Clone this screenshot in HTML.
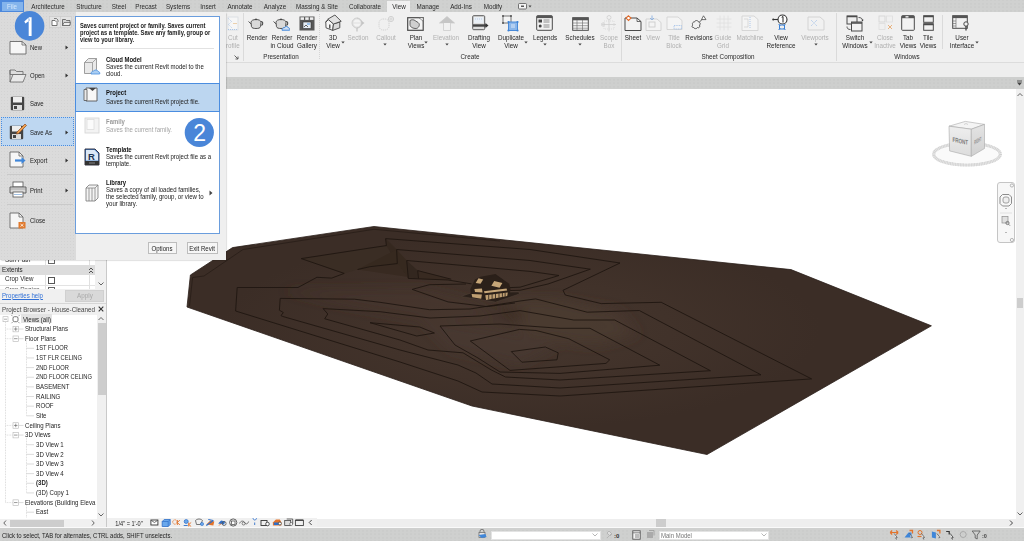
<!DOCTYPE html><html><head><meta charset="utf-8"><style>
*{margin:0;padding:0;box-sizing:border-box}
html,body{width:1024px;height:541px;overflow:hidden;background:#fff;font-family:"Liberation Sans",sans-serif;color:#222}
.a{position:absolute}
.t{position:absolute;white-space:nowrap;line-height:10px}
</style></head><body>
<div class="a" style="left:0px;top:0px;width:1024px;height:12px;background:#d0d1d0;background-image:radial-gradient(circle,rgba(0,0,0,0.035) 0.5px,transparent 0.9px);background-size:4px 3.5px;background-position:1px 2px"></div>
<div class="a" style="left:0px;top:12px;width:1024px;height:50px;background:#f0f0f0"></div>
<div class="a" style="left:0px;top:61.5px;width:1024px;height:1px;background:#dcdcdc"></div>
<div class="a" style="left:0px;top:62.5px;width:1024px;height:14.5px;background:#eeeeee"></div>
<div class="a" style="left:107px;top:89px;width:909px;height:429.5px;background:#fff"></div>
<div class="a" style="left:1016px;top:89px;width:8px;height:438px;background:#eeeeee"></div>
<div class="a" style="left:107px;top:518.5px;width:909px;height:8px;background:#eeeeee"></div>
<div class="a" style="left:0px;top:526.5px;width:1024px;height:1px;background:#fafafa"></div>
<div class="a" style="left:387px;top:1px;width:23px;height:11px;background:#f0f0f0"></div>
<div class="t" style="left:-12.10px;top:2.15px;width:120px;text-align:center;font-size:7.12px;color:#2a2a2a;font-weight:normal;transform:scaleX(0.885);transform-origin:60px 50%;">Architecture</div>
<div class="t" style="left:28.50px;top:2.15px;width:120px;text-align:center;font-size:7.12px;color:#2a2a2a;font-weight:normal;transform:scaleX(0.885);transform-origin:60px 50%;">Structure</div>
<div class="t" style="left:58.50px;top:2.15px;width:120px;text-align:center;font-size:7.12px;color:#2a2a2a;font-weight:normal;transform:scaleX(0.885);transform-origin:60px 50%;">Steel</div>
<div class="t" style="left:86.15px;top:2.15px;width:120px;text-align:center;font-size:7.12px;color:#2a2a2a;font-weight:normal;transform:scaleX(0.885);transform-origin:60px 50%;">Precast</div>
<div class="t" style="left:118.40px;top:2.15px;width:120px;text-align:center;font-size:7.12px;color:#2a2a2a;font-weight:normal;transform:scaleX(0.885);transform-origin:60px 50%;">Systems</div>
<div class="t" style="left:148.25px;top:2.15px;width:120px;text-align:center;font-size:7.12px;color:#2a2a2a;font-weight:normal;transform:scaleX(0.885);transform-origin:60px 50%;">Insert</div>
<div class="t" style="left:179.90px;top:2.15px;width:120px;text-align:center;font-size:7.12px;color:#2a2a2a;font-weight:normal;transform:scaleX(0.885);transform-origin:60px 50%;">Annotate</div>
<div class="t" style="left:214.55px;top:2.15px;width:120px;text-align:center;font-size:7.12px;color:#2a2a2a;font-weight:normal;transform:scaleX(0.885);transform-origin:60px 50%;">Analyze</div>
<div class="t" style="left:257.20px;top:2.15px;width:120px;text-align:center;font-size:7.12px;color:#2a2a2a;font-weight:normal;transform:scaleX(0.885);transform-origin:60px 50%;">Massing &amp; Site</div>
<div class="t" style="left:305.30px;top:2.15px;width:120px;text-align:center;font-size:7.12px;color:#2a2a2a;font-weight:normal;transform:scaleX(0.885);transform-origin:60px 50%;">Collaborate</div>
<div class="t" style="left:338.50px;top:2.15px;width:120px;text-align:center;font-size:7.12px;color:#2a2a2a;font-weight:normal;transform:scaleX(0.885);transform-origin:60px 50%;">View</div>
<div class="t" style="left:367.50px;top:2.15px;width:120px;text-align:center;font-size:7.12px;color:#2a2a2a;font-weight:normal;transform:scaleX(0.885);transform-origin:60px 50%;">Manage</div>
<div class="t" style="left:401.00px;top:2.15px;width:120px;text-align:center;font-size:7.12px;color:#2a2a2a;font-weight:normal;transform:scaleX(0.885);transform-origin:60px 50%;">Add-Ins</div>
<div class="t" style="left:433.00px;top:2.15px;width:120px;text-align:center;font-size:7.12px;color:#2a2a2a;font-weight:normal;transform:scaleX(0.885);transform-origin:60px 50%;">Modify</div>
<svg class="a" style="left:518px;top:3px;" width="14" height="7" viewBox="0 0 14 7"><rect x="0.5" y="0.5" width="8" height="5.5" rx="1" fill="#f4f4f4" stroke="#555" stroke-width="0.8"/><rect x="3" y="2.5" width="3" height="1.5" fill="#555"/><path d="M10.5 2.5h3l-1.5 2z" fill="#444"/></svg>
<div class="a" style="left:0px;top:0px;width:24px;height:12.5px;background:#4c88dc"></div>
<div class="a" style="left:1.8px;top:2px;width:21px;height:9px;background:#84b4ec"></div>
<div class="t" style="left:-48.00px;top:2.25px;width:120px;text-align:center;font-size:7.12px;color:#d6e8fa;font-weight:normal;transform:scaleX(0.885);transform-origin:60px 50%;">File</div>
<div class="t" style="left:228.30px;top:33.05px;font-size:7.12px;color:#b0b0b0;font-weight:normal;transform:scaleX(0.885);transform-origin:0 50%;">Cut</div>
<div class="t" style="left:226.20px;top:40.95px;font-size:7.12px;color:#b0b0b0;font-weight:normal;transform:scaleX(0.885);transform-origin:0 50%;">rofile</div>
<div class="t" style="left:196.50px;top:33.05px;width:120px;text-align:center;font-size:7.12px;color:#262626;font-weight:normal;transform:scaleX(0.885);transform-origin:60px 50%;">Render</div>
<div class="t" style="left:221.50px;top:33.05px;width:120px;text-align:center;font-size:7.12px;color:#262626;font-weight:normal;transform:scaleX(0.885);transform-origin:60px 50%;">Render</div>
<div class="t" style="left:221.50px;top:40.95px;width:120px;text-align:center;font-size:7.12px;color:#262626;font-weight:normal;transform:scaleX(0.885);transform-origin:60px 50%;">in Cloud</div>
<div class="t" style="left:246.50px;top:33.05px;width:120px;text-align:center;font-size:7.12px;color:#262626;font-weight:normal;transform:scaleX(0.885);transform-origin:60px 50%;">Render</div>
<div class="t" style="left:246.50px;top:40.95px;width:120px;text-align:center;font-size:7.12px;color:#262626;font-weight:normal;transform:scaleX(0.885);transform-origin:60px 50%;">Gallery</div>
<div class="t" style="left:273.00px;top:33.05px;width:120px;text-align:center;font-size:7.12px;color:#262626;font-weight:normal;transform:scaleX(0.885);transform-origin:60px 50%;">3D</div>
<div class="t" style="left:273.00px;top:40.95px;width:120px;text-align:center;font-size:7.12px;color:#262626;font-weight:normal;transform:scaleX(0.885);transform-origin:60px 50%;">View</div>
<div class="t" style="left:297.80px;top:33.05px;width:120px;text-align:center;font-size:7.12px;color:#b0b0b0;font-weight:normal;transform:scaleX(0.885);transform-origin:60px 50%;">Section</div>
<div class="t" style="left:326.00px;top:33.05px;width:120px;text-align:center;font-size:7.12px;color:#b0b0b0;font-weight:normal;transform:scaleX(0.885);transform-origin:60px 50%;">Callout</div>
<div class="t" style="left:355.50px;top:33.05px;width:120px;text-align:center;font-size:7.12px;color:#262626;font-weight:normal;transform:scaleX(0.885);transform-origin:60px 50%;">Plan</div>
<div class="t" style="left:355.50px;top:40.95px;width:120px;text-align:center;font-size:7.12px;color:#262626;font-weight:normal;transform:scaleX(0.885);transform-origin:60px 50%;">Views</div>
<div class="t" style="left:386.30px;top:33.05px;width:120px;text-align:center;font-size:7.12px;color:#b0b0b0;font-weight:normal;transform:scaleX(0.885);transform-origin:60px 50%;">Elevation</div>
<div class="t" style="left:418.80px;top:33.05px;width:120px;text-align:center;font-size:7.12px;color:#262626;font-weight:normal;transform:scaleX(0.885);transform-origin:60px 50%;">Drafting</div>
<div class="t" style="left:418.80px;top:40.95px;width:120px;text-align:center;font-size:7.12px;color:#262626;font-weight:normal;transform:scaleX(0.885);transform-origin:60px 50%;">View</div>
<div class="t" style="left:450.60px;top:33.05px;width:120px;text-align:center;font-size:7.12px;color:#262626;font-weight:normal;transform:scaleX(0.885);transform-origin:60px 50%;">Duplicate</div>
<div class="t" style="left:450.60px;top:40.95px;width:120px;text-align:center;font-size:7.12px;color:#262626;font-weight:normal;transform:scaleX(0.885);transform-origin:60px 50%;">View</div>
<div class="t" style="left:485.00px;top:33.05px;width:120px;text-align:center;font-size:7.12px;color:#262626;font-weight:normal;transform:scaleX(0.885);transform-origin:60px 50%;">Legends</div>
<div class="t" style="left:520.00px;top:33.05px;width:120px;text-align:center;font-size:7.12px;color:#262626;font-weight:normal;transform:scaleX(0.885);transform-origin:60px 50%;">Schedules</div>
<div class="t" style="left:549.00px;top:33.05px;width:120px;text-align:center;font-size:7.12px;color:#b0b0b0;font-weight:normal;transform:scaleX(0.885);transform-origin:60px 50%;">Scope</div>
<div class="t" style="left:549.00px;top:40.95px;width:120px;text-align:center;font-size:7.12px;color:#b0b0b0;font-weight:normal;transform:scaleX(0.885);transform-origin:60px 50%;">Box</div>
<div class="t" style="left:573.00px;top:33.05px;width:120px;text-align:center;font-size:7.12px;color:#262626;font-weight:normal;transform:scaleX(0.885);transform-origin:60px 50%;">Sheet</div>
<div class="t" style="left:593.30px;top:33.05px;width:120px;text-align:center;font-size:7.12px;color:#b0b0b0;font-weight:normal;transform:scaleX(0.885);transform-origin:60px 50%;">View</div>
<div class="t" style="left:614.00px;top:33.05px;width:120px;text-align:center;font-size:7.12px;color:#b0b0b0;font-weight:normal;transform:scaleX(0.885);transform-origin:60px 50%;">Title</div>
<div class="t" style="left:614.00px;top:40.95px;width:120px;text-align:center;font-size:7.12px;color:#b0b0b0;font-weight:normal;transform:scaleX(0.885);transform-origin:60px 50%;">Block</div>
<div class="t" style="left:638.80px;top:33.05px;width:120px;text-align:center;font-size:7.12px;color:#262626;font-weight:normal;transform:scaleX(0.885);transform-origin:60px 50%;">Revisions</div>
<div class="t" style="left:663.00px;top:33.05px;width:120px;text-align:center;font-size:7.12px;color:#b0b0b0;font-weight:normal;transform:scaleX(0.885);transform-origin:60px 50%;">Guide</div>
<div class="t" style="left:663.00px;top:40.95px;width:120px;text-align:center;font-size:7.12px;color:#b0b0b0;font-weight:normal;transform:scaleX(0.885);transform-origin:60px 50%;">Grid</div>
<div class="t" style="left:690.20px;top:33.05px;width:120px;text-align:center;font-size:7.12px;color:#b0b0b0;font-weight:normal;transform:scaleX(0.885);transform-origin:60px 50%;">Matchline</div>
<div class="t" style="left:721.00px;top:33.05px;width:120px;text-align:center;font-size:7.12px;color:#262626;font-weight:normal;transform:scaleX(0.885);transform-origin:60px 50%;">View</div>
<div class="t" style="left:721.00px;top:40.95px;width:120px;text-align:center;font-size:7.12px;color:#262626;font-weight:normal;transform:scaleX(0.885);transform-origin:60px 50%;">Reference</div>
<div class="t" style="left:755.00px;top:33.05px;width:120px;text-align:center;font-size:7.12px;color:#b0b0b0;font-weight:normal;transform:scaleX(0.885);transform-origin:60px 50%;">Viewports</div>
<div class="t" style="left:795.00px;top:33.05px;width:120px;text-align:center;font-size:7.12px;color:#262626;font-weight:normal;transform:scaleX(0.885);transform-origin:60px 50%;">Switch</div>
<div class="t" style="left:795.00px;top:40.95px;width:120px;text-align:center;font-size:7.12px;color:#262626;font-weight:normal;transform:scaleX(0.885);transform-origin:60px 50%;">Windows</div>
<div class="t" style="left:825.00px;top:33.05px;width:120px;text-align:center;font-size:7.12px;color:#b0b0b0;font-weight:normal;transform:scaleX(0.885);transform-origin:60px 50%;">Close</div>
<div class="t" style="left:825.00px;top:40.95px;width:120px;text-align:center;font-size:7.12px;color:#b0b0b0;font-weight:normal;transform:scaleX(0.885);transform-origin:60px 50%;">Inactive</div>
<div class="t" style="left:847.70px;top:33.05px;width:120px;text-align:center;font-size:7.12px;color:#262626;font-weight:normal;transform:scaleX(0.885);transform-origin:60px 50%;">Tab</div>
<div class="t" style="left:847.70px;top:40.95px;width:120px;text-align:center;font-size:7.12px;color:#262626;font-weight:normal;transform:scaleX(0.885);transform-origin:60px 50%;">Views</div>
<div class="t" style="left:868.00px;top:33.05px;width:120px;text-align:center;font-size:7.12px;color:#262626;font-weight:normal;transform:scaleX(0.885);transform-origin:60px 50%;">Tile</div>
<div class="t" style="left:868.00px;top:40.95px;width:120px;text-align:center;font-size:7.12px;color:#262626;font-weight:normal;transform:scaleX(0.885);transform-origin:60px 50%;">Views</div>
<div class="t" style="left:901.60px;top:33.05px;width:120px;text-align:center;font-size:7.12px;color:#262626;font-weight:normal;transform:scaleX(0.885);transform-origin:60px 50%;">User</div>
<div class="t" style="left:901.60px;top:40.95px;width:120px;text-align:center;font-size:7.12px;color:#262626;font-weight:normal;transform:scaleX(0.885);transform-origin:60px 50%;">Interface</div>
<svg class="a" style="left:340.5px;top:41.3px;" width="4" height="3" viewBox="0 0 4 3"><path d="M0.3 0.5h3.4l-1.7 2z" fill="#444"/></svg>
<svg class="a" style="left:383.4px;top:42.8px;" width="4" height="3" viewBox="0 0 4 3"><path d="M0.3 0.5h3.4l-1.7 2z" fill="#444"/></svg>
<svg class="a" style="left:424.4px;top:40.8px;" width="4" height="3" viewBox="0 0 4 3"><path d="M0.3 0.5h3.4l-1.7 2z" fill="#444"/></svg>
<svg class="a" style="left:444.6px;top:42.8px;" width="4" height="3" viewBox="0 0 4 3"><path d="M0.3 0.5h3.4l-1.7 2z" fill="#444"/></svg>
<svg class="a" style="left:524.4px;top:41px;" width="4" height="3" viewBox="0 0 4 3"><path d="M0.3 0.5h3.4l-1.7 2z" fill="#444"/></svg>
<svg class="a" style="left:543.2px;top:42.8px;" width="4" height="3" viewBox="0 0 4 3"><path d="M0.3 0.5h3.4l-1.7 2z" fill="#444"/></svg>
<svg class="a" style="left:578.3px;top:42.8px;" width="4" height="3" viewBox="0 0 4 3"><path d="M0.3 0.5h3.4l-1.7 2z" fill="#444"/></svg>
<svg class="a" style="left:813.9px;top:43.2px;" width="4" height="3" viewBox="0 0 4 3"><path d="M0.3 0.5h3.4l-1.7 2z" fill="#444"/></svg>
<svg class="a" style="left:868.7px;top:40.5px;" width="4" height="3" viewBox="0 0 4 3"><path d="M0.3 0.5h3.4l-1.7 2z" fill="#444"/></svg>
<svg class="a" style="left:974.8px;top:40.5px;" width="4" height="3" viewBox="0 0 4 3"><path d="M0.3 0.5h3.4l-1.7 2z" fill="#444"/></svg>
<div class="t" style="left:221.30px;top:52.25px;width:120px;text-align:center;font-size:7.12px;color:#2a2a2a;font-weight:normal;transform:scaleX(0.885);transform-origin:60px 50%;">Presentation</div>
<div class="t" style="left:410.00px;top:52.25px;width:120px;text-align:center;font-size:7.12px;color:#2a2a2a;font-weight:normal;transform:scaleX(0.885);transform-origin:60px 50%;">Create</div>
<div class="t" style="left:668.30px;top:52.25px;width:120px;text-align:center;font-size:7.12px;color:#2a2a2a;font-weight:normal;transform:scaleX(0.885);transform-origin:60px 50%;">Sheet Composition</div>
<div class="t" style="left:847.00px;top:52.25px;width:120px;text-align:center;font-size:7.12px;color:#2a2a2a;font-weight:normal;transform:scaleX(0.885);transform-origin:60px 50%;">Windows</div>
<svg class="a" style="left:234px;top:55px;" width="5" height="5" viewBox="0 0 5 5"><path d="M0.5 0.5L4 4M4 1.5V4H1.5" stroke="#555" stroke-width="0.9" fill="none"/></svg>
<div class="a" style="left:243.3px;top:13px;width:0.8px;height:48px;background:#dadada"></div>
<div class="a" style="left:620.8px;top:13px;width:0.8px;height:48px;background:#dadada"></div>
<div class="a" style="left:835.7px;top:13px;width:0.8px;height:48px;background:#dadada"></div>
<div class="a" style="left:319.3px;top:14px;width:0.8px;height:46px;background:repeating-linear-gradient(#d5d5d5 0 1px, transparent 1px 2px)"></div>
<div class="a" style="left:941.5px;top:15px;width:0.8px;height:34px;background:#dadada"></div>
<svg class="a" style="left:227px;top:16px;" width="12" height="15" viewBox="0 0 12 15"><rect x="1" y="1" width="10" height="13" fill="#f6f6f6" stroke="#d8dce2" stroke-width="0.8"/><path d="M1.5 2.5l3 3-3 3 3 3" stroke="#a9c4e6" stroke-width="1" fill="none" stroke-dasharray="1 1"/><path d="M1 13.5h10" stroke="#a9c4e6" stroke-dasharray="1 1"/><path d="M6 7.5h4" stroke="#e8c79a" stroke-width="0.8"/></svg>
<svg class="a" style="left:247.5px;top:17px;" width="16" height="12" viewBox="0 0 16 12"><path d="M3 5.5c0-2 2.2-3 5-3s5 1 5 3l-0.5 4.2c-0.4 1.3-2 1.8-4.5 1.8s-4.1-0.5-4.5-1.8z" fill="#d9d9d9" stroke="#444" stroke-width="0.9"/><path d="M0.5 4.5l2.7 2.5" stroke="#444" stroke-width="0.9"/><path d="M13 4.5c2 0 2.5 2.5 0.5 4" stroke="#444" stroke-width="1.1" fill="none"/><circle cx="8" cy="2.3" r="0.9" fill="#444"/></svg>
<svg class="a" style="left:273px;top:17px;" width="17" height="14" viewBox="0 0 17 14"><path d="M3 5.5c0-2 2.2-3 5-3s5 1 5 3l-0.5 4.2c-0.4 1.3-2 1.8-4.5 1.8s-4.1-0.5-4.5-1.8z" fill="#d9d9d9" stroke="#444" stroke-width="0.9"/><path d="M0.5 4.5l2.7 2.5" stroke="#444" stroke-width="0.9"/><path d="M13 4.5c2 0 2.5 2.5 0.5 4" stroke="#444" stroke-width="1.1" fill="none"/><circle cx="8" cy="2.3" r="0.9" fill="#444"/><path d="M9 13.2c0-1.5 1-2.6 2.5-2.6 0.6-1.5 3.5-1.5 4 0.3 1 0 1.5 1.2 1.2 2.3z" fill="#cfe0f5" stroke="#3f86d9" stroke-width="1"/></svg>
<svg class="a" style="left:298.5px;top:16px;" width="16" height="15" viewBox="0 0 16 15"><rect x="0.5" y="0.5" width="15" height="14" fill="#585858"/><rect x="1.5" y="1.3" width="3.5" height="2.6" fill="#eee"/><rect x="6.2" y="1.3" width="3.5" height="2.6" fill="#eee"/><rect x="10.9" y="1.3" width="3.5" height="2.6" fill="#eee"/><rect x="4" y="6" width="8" height="6.5" fill="#e7eef6" stroke="#333" stroke-width="0.6"/><path d="M5 11l2-2 2 2" stroke="#444" fill="none" stroke-width="0.8"/><rect x="8" y="7" width="3" height="2" fill="#9fc3ea"/></svg>
<svg class="a" style="left:322px;top:13px;" width="24" height="20" viewBox="0 0 24 20"><path d="M3.8 9.2L6.5 6.5 11.5 10.9 10.7 17.4 4 14.8z" fill="#f7f7f7" stroke="#444" stroke-width="0.9" stroke-linejoin="round"/><path d="M11.5 10.7L17.8 9.2 17.8 14.8 10.7 17.4z" fill="#d9d9d9" stroke="#444" stroke-width="0.9" stroke-linejoin="round"/><path d="M5.8 6.2L12.9 2 19.2 8.3 11.6 11z" fill="#e2e2e2" stroke="#444" stroke-width="0.9" stroke-linejoin="round"/><path d="M3.2 9.3L6.2 6.4" stroke="#444" stroke-width="1"/><path d="M7.2 11.6h1.2v4h-1.2z" fill="#333"/></svg>
<svg class="a" style="left:351px;top:15.5px;" width="15" height="16" viewBox="0 0 15 16"><circle cx="6" cy="7" r="5" fill="#f0f0f0" stroke="#c9c9c9" stroke-width="0.9"/><path d="M6 1.5L13.5 7 6 12.5z" fill="#c4c4c4"/><circle cx="6" cy="7" r="4.2" fill="#f3f3f3" stroke="#cfcfcf" stroke-width="0.7"/><path d="M6 12v3.5" stroke="#c4c4c4" stroke-width="1.3"/><path d="M2.5 7h7" stroke="#d3d3d3" stroke-width="0.6"/></svg>
<svg class="a" style="left:378px;top:15px;" width="17" height="16" viewBox="0 0 17 16"><rect x="1" y="4" width="10" height="11" rx="4" fill="none" stroke="#cdcdcd" stroke-width="0.9" stroke-dasharray="1.2 0.8"/><circle cx="13" cy="4" r="2.6" fill="none" stroke="#cdcdcd" stroke-width="0.9"/><path d="M13 2.2v3.6M11.2 4h3.6" stroke="#cdcdcd" stroke-width="0.7"/></svg>
<svg class="a" style="left:407px;top:17px;" width="17" height="14" viewBox="0 0 17 14"><rect x="0.7" y="0.7" width="15.5" height="12.6" fill="#f4f4f4" stroke="#4a4a4a" stroke-width="1.2"/><path d="M3 3.5c1-1 4-1 5 0s3 1.5 4 3-0.5 5-3 5-6-1-6-4z" fill="#cfcfcf" stroke="#555" stroke-width="0.9"/><path d="M12 0.7l4.2 3.5V0.7z" fill="#fff" stroke="#555" stroke-width="0.6"/></svg>
<svg class="a" style="left:438.5px;top:16px;" width="16" height="15" viewBox="0 0 16 15"><path d="M8 0.5L15.5 7h-4v7.5h-7V7h-4z" fill="#f1f1f1" stroke="#d0d0d0" stroke-width="0.9"/><path d="M8 0.5L15.5 7h-15z" fill="#c6c6c6"/></svg>
<svg class="a" style="left:471.5px;top:15px;" width="17" height="16" viewBox="0 0 17 16"><rect x="0.7" y="0.7" width="12" height="14" rx="1" fill="#dedede" stroke="#5a5a5a" stroke-width="1"/><rect x="2" y="2" width="9.5" height="6" fill="#eaf0f6"/><path d="M3 4h7" stroke="#9fbbe0" stroke-width="0.6" stroke-dasharray="1 1"/><path d="M1 10.5h13" stroke="#444" stroke-width="2.4"/><path d="M13.5 8l3 2.5-3 2.5z" fill="#333"/></svg>
<svg class="a" style="left:501.5px;top:14.5px;" width="17" height="17" viewBox="0 0 17 17"><rect x="1" y="1" width="8" height="7" fill="#f4f4f4" stroke="#555" stroke-width="0.8"/><circle cx="1" cy="1" r="1" fill="#555"/><circle cx="9" cy="1" r="1" fill="#555"/><circle cx="1" cy="8" r="1" fill="#555"/><rect x="6.5" y="7" width="9" height="8.5" fill="#8ab6ea" stroke="#3c82d6" stroke-width="0.9"/><circle cx="6.5" cy="7" r="1.1" fill="#3c82d6"/><circle cx="15.5" cy="7" r="1.1" fill="#3c82d6"/><circle cx="6.5" cy="15.5" r="1.1" fill="#3c82d6"/><circle cx="15.5" cy="15.5" r="1.1" fill="#3c82d6"/><path d="M9 10h4M9 12h4" stroke="#fff" stroke-width="0.7"/></svg>
<svg class="a" style="left:536px;top:15px;" width="17" height="16" viewBox="0 0 17 16"><rect x="0.7" y="0.7" width="15.6" height="14.6" rx="1" fill="#f2f2f2" stroke="#4a4a4a" stroke-width="1"/><rect x="0.7" y="0.7" width="15.6" height="2.4" fill="#555"/><rect x="2.5" y="4.5" width="3.5" height="3" fill="#444"/><circle cx="4.2" cy="11" r="1.5" fill="#444"/><path d="M7.5 5h6M7.5 7h6M7.5 10h6M7.5 12h6" stroke="#777" stroke-width="0.8"/></svg>
<svg class="a" style="left:572px;top:16.5px;" width="17" height="14" viewBox="0 0 17 14"><rect x="0.7" y="0.7" width="15.6" height="12.6" fill="#f6f6f6" stroke="#4a4a4a" stroke-width="1"/><rect x="0.7" y="0.7" width="15.6" height="2.6" fill="#555"/><path d="M1 6h15M1 8.7h15M1 11.2h15M5 3v10M10.5 3v10" stroke="#666" stroke-width="0.6"/></svg>
<svg class="a" style="left:601px;top:14.5px;" width="16" height="17" viewBox="0 0 16 17"><circle cx="8" cy="2.5" r="2" fill="none" stroke="#cfcfcf" stroke-width="0.8"/><path d="M8 4.5v12M1 9.5h14" stroke="#cfcfcf" stroke-width="0.8"/><rect x="3" y="6" width="10" height="8" fill="none" stroke="#d7d7d7" stroke-dasharray="1 1" stroke-width="0.8"/><circle cx="2" cy="9.5" r="1.6" fill="none" stroke="#cfcfcf" stroke-width="0.8"/></svg>
<svg class="a" style="left:624px;top:14.5px;" width="18" height="16" viewBox="0 0 18 16"><path d="M1 3h12l4 3.5v9h-16z" fill="#f2f2f2" stroke="#4a4a4a" stroke-width="1"/><path d="M13 3v3.5h4" fill="none" stroke="#4a4a4a" stroke-width="0.8"/><path d="M4.5 0.8l2.5 2.3-2.5 2.3-2.5-2.3z" fill="#fff" stroke="#e06a2a" stroke-width="1.1"/></svg>
<svg class="a" style="left:644.5px;top:14.5px;" width="17" height="16" viewBox="0 0 17 16"><path d="M1 4h11l4 3.5v8h-15z" fill="#f4f4f4" stroke="#cfcfcf" stroke-width="0.9"/><rect x="4" y="7" width="6" height="5" fill="none" stroke="#c9c9c9" stroke-width="0.8"/><path d="M7 0.5v4M5 3l2 2 2-2" stroke="#8ab0e0" stroke-width="0.9" fill="none"/></svg>
<svg class="a" style="left:665.5px;top:16px;" width="17" height="14" viewBox="0 0 17 14"><path d="M1 1h11l4 3.5v9h-15z" fill="#f4f4f4" stroke="#d2d2d2" stroke-width="0.9"/><rect x="8" y="9.5" width="7.5" height="3.5" fill="none" stroke="#9cbde8" stroke-width="0.8" stroke-dasharray="1 0.7"/></svg>
<svg class="a" style="left:690.5px;top:14.5px;" width="16" height="16" viewBox="0 0 16 16"><path d="M2 10c-1.5-1 0-3.5 1.5-3 0.5-2 3.5-2 4 0 1.5 0 2.5 2 1 3 1 1.5-0.5 3.5-2 2.5-0.5 1.5-3.5 1.5-3.8 0-1.5 0.5-2.5-1.5-0.7-2.5z" fill="#f0f0f0" stroke="#4a4a4a" stroke-width="0.9"/><path d="M8.5 7l4-4" stroke="#4a4a4a" stroke-width="0.9"/><path d="M12.5 0.8l2.5 3.8h-4.5z" fill="#fff" stroke="#4a4a4a" stroke-width="0.8"/></svg>
<svg class="a" style="left:716px;top:15px;" width="16" height="16" viewBox="0 0 16 16"><path d="M4 0.5v15M8 0.5v15M12 0.5v15M0.5 4h15M0.5 8h15M0.5 12h15" stroke="#dfdfdf" stroke-width="0.8"/></svg>
<svg class="a" style="left:741px;top:15px;" width="18" height="16" viewBox="0 0 18 16"><path d="M1 1h12l4 3.5v11h-16z" fill="#f4f4f4" stroke="#d2d2d2" stroke-width="0.9"/><path d="M9 2v12" stroke="#9cbde8" stroke-width="0.8" stroke-dasharray="1 1"/><path d="M3 4h4v8h-4" stroke="#cfcfcf" fill="none" stroke-width="0.7"/></svg>
<svg class="a" style="left:771.5px;top:13.5px;" width="20" height="18" viewBox="0 0 20 18"><path d="M1 5.5h5" stroke="#333" stroke-width="1.1"/><circle cx="1.2" cy="5.5" r="1" fill="#333"/><circle cx="10.5" cy="5.5" r="4.5" fill="#fff" stroke="#333" stroke-width="1.1"/><path d="M9.7 3.3l1.3-0.8v6" stroke="#222" stroke-width="1" fill="none"/><rect x="7.5" y="11" width="5" height="4" fill="none" stroke="#3c82d6" stroke-width="1"/><path d="M6.5 10l2 2M13.5 10l-2 2M6.5 16l2-2M13.5 16l-2-2" stroke="#3c82d6" stroke-width="0.9"/></svg>
<svg class="a" style="left:806.5px;top:15.5px;" width="18" height="15" viewBox="0 0 18 15"><path d="M1 1h12l4 3.5v9.5h-16z" fill="#f1f1f1" stroke="#d0d0d0" stroke-width="0.9"/><path d="M4 4l6 6M10 4l-6 6" stroke="#a6c3ea" stroke-width="0.9" stroke-dasharray="1 0.8"/></svg>
<svg class="a" style="left:845.5px;top:14.5px;" width="19" height="17" viewBox="0 0 19 17"><rect x="1" y="1" width="10" height="8" fill="#eee" stroke="#4a4a4a" stroke-width="1"/><rect x="5.5" y="7" width="10.5" height="9" fill="#f2f2f2" stroke="#4a4a4a" stroke-width="1"/><path d="M1 1.5h10M5.5 8h10.5" stroke="#4a4a4a" stroke-width="1.5"/><path d="M12.5 2.5c2.5 0 4 1 4 3" stroke="#333" stroke-width="0.8" fill="none"/><path d="M15.3 4.8l1.2 1.5 1.2-1.5z" fill="#333"/><path d="M4.5 14.5c-2.5 0-3.5-1-3.5-3" stroke="#333" stroke-width="0.8" fill="none"/></svg>
<svg class="a" style="left:877.5px;top:15px;" width="16" height="16" viewBox="0 0 16 16"><rect x="1" y="1" width="6" height="6" fill="none" stroke="#d2d2d2" stroke-width="0.8"/><rect x="8.5" y="1" width="6" height="6" fill="none" stroke="#dedede" stroke-width="0.8"/><rect x="1" y="8.5" width="6" height="6" fill="none" stroke="#dedede" stroke-width="0.8"/><path d="M10 10l4 4M14 10l-4 4" stroke="#e8b27e" stroke-width="1"/></svg>
<svg class="a" style="left:901px;top:15px;" width="14" height="16" viewBox="0 0 14 16"><rect x="0.7" y="0.7" width="12.6" height="14.6" rx="0.8" fill="#f2f2f2" stroke="#4a4a4a" stroke-width="1"/><rect x="0.7" y="0.7" width="12.6" height="2.5" fill="#555"/><rect x="4.5" y="1" width="3" height="1.6" fill="#ddd"/></svg>
<svg class="a" style="left:923px;top:15px;" width="11" height="16" viewBox="0 0 11 16"><rect x="0.7" y="0.7" width="9.6" height="6.6" fill="#f2f2f2" stroke="#4a4a4a" stroke-width="1"/><rect x="0.7" y="8.7" width="9.6" height="6.6" fill="#f2f2f2" stroke="#4a4a4a" stroke-width="1"/><path d="M0.7 1.5h9.6M0.7 9.5h9.6" stroke="#4a4a4a" stroke-width="1.4"/></svg>
<svg class="a" style="left:952px;top:15px;" width="18" height="16" viewBox="0 0 18 16"><rect x="0.7" y="0.7" width="14.6" height="12.6" fill="#f2f2f2" stroke="#4a4a4a" stroke-width="1"/><rect x="0.7" y="0.7" width="14.6" height="2.4" fill="#555"/><path d="M4 3v10M1 6h3M1 8.5h3M1 11h3" stroke="#777" stroke-width="0.7"/><circle cx="14" cy="9" r="2.2" fill="#f2f2f2" stroke="#4a4a4a" stroke-width="1"/><path d="M14 11v4.5" stroke="#4a4a4a" stroke-width="1.4"/></svg>
<svg class="a" style="left:0px;top:0px;" width="1024" height="541" viewBox="0 0 1024 541"><defs><radialGradient id="tg" cx="520" cy="330" r="300" gradientUnits="userSpaceOnUse" gradientTransform="translate(520 330) scale(1 0.33) translate(-520 -330)"><stop offset="0" stop-color="#46372e"/><stop offset="0.5" stop-color="#41322a"/><stop offset="1" stop-color="#3b2d26"/></radialGradient><clipPath id="tc"><polygon points="190.4,275 232.5,247.6 374,226.5 791,269.6 931.4,325.8 707,454.5 472,406 187,307"/></clipPath><filter id="bl" x="-50%" y="-50%" width="200%" height="200%"><feGaussianBlur stdDeviation="6"/></filter></defs><polygon points="190.4,275 232.5,247.6 374,226.5 791,269.6 931.4,325.8 707,454.5 472,406 187,307" fill="url(#tg)"/><g clip-path="url(#tc)"><g filter="url(#bl)"><polygon points="500,300 560,300 620,310 640,335 600,345 530,335" fill="#4a3a30" opacity="0.5"/><polygon points="280,290 420,288 470,300 500,320 430,322 340,305" fill="#4a3a30" opacity="0.4"/><polygon points="420,320 500,330 560,345 520,365 450,350" fill="#4a3a30" opacity="0.45"/><polygon points="505,298 560,300 610,312 630,335 585,345 525,335" fill="#4e3d33" opacity="0.55"/><ellipse cx="512" cy="314" rx="14" ry="7" fill="#30241d" opacity="0.45"/></g><polygon points="301.25,258.6 370,248 386.4,245.6 397.3,263.6 357.5,269.5 344.2,273.4" fill="#3a2d24"/><polygon points="386.4,245.6 385.6,238.6 396.6,249.5 397.3,263.6" fill="#35281f"/><polygon points="396.6,249.5 406.7,260.5 408.3,278.4 397.3,263.6 370,266.7 357.5,269.5" fill="#36291f"/><polygon points="406.7,260.5 417.7,270.6 418.5,278.4 408.3,278.4" fill="#33271f"/><polygon points="357.5,269.5 397.3,263.6 408.3,278.4 448,280 451.25,279.2 417.7,270.6 418.5,278.4" fill="#382a21"/><polyline points="189.5,306 192.6,277.5 204,276 243,249.5 374,229.3 500,241" fill="none" stroke="#251b16" stroke-width="0.7"/><polyline points="235.6,311 237.2,287.5 298,287.5 316.9,277.3 331.7,278.1 344.2,273.4 301.25,258.6 370,248 386.4,245.6 385.6,238.6 530,249.5 620,263 563,290.3 565.3,295 601.25,303.6 661.2,302.3 811.6,378.9 560,396 482,392 458,381 400,362 235.6,311" fill="none" stroke="#1f1611" stroke-width="0.9" stroke-linejoin="round"/><polyline points="280.2,298.4 354.4,299.2 380,302.3 429.4,309.7 470,309 520,301 535.6,298.9 587.2,312.2 639.3,310.5 761,374.8 560,388 492,384 476,373 458,365 400,350 282.5,316.4 281,315.6 283.3,312.5 279.4,310.2 280.2,298.4" fill="none" stroke="#1f1611" stroke-width="0.9" stroke-linejoin="round"/><polyline points="323.1,308.6 380,311.7 430,318 480,316 520,310.6 573.7,320 614.7,320 710.4,370.7 560,380 505.5,377 491.4,370 463,352.8 428,350 400,340 324.7,318.75 327.8,314 323.1,308.6" fill="none" stroke="#1f1611" stroke-width="0.9" stroke-linejoin="round"/><polyline points="370,322.7 419.7,327 434.4,333 416.8,336 370,322.7" fill="none" stroke="#1f1611" stroke-width="0.9" stroke-linejoin="round"/><polyline points="440,326 500,324 560,328.3 590,328.3 659.8,365.2 560,373.4 500,372 478,358 455,345 440,326" fill="none" stroke="#1f1611" stroke-width="0.9" stroke-linejoin="round"/><polyline points="519.5,329.4 536,330.5 568.7,338.7 609.7,359.8 606,363.4 510,370.4 470.3,341 519.5,329.4" fill="none" stroke="#1f1611" stroke-width="0.9" stroke-linejoin="round"/><polyline points="511.3,351.6 545.3,347 558.2,352.8 557,359.8 521.9,362.2 511.3,351.6" fill="none" stroke="#1f1611" stroke-width="0.9" stroke-linejoin="round"/><polyline points="357.5,269.5 370,266.7 397.3,263.6 396.6,249.5 530,260.5 590.3,269.2 548,284 520,290.3 490,291" fill="none" stroke="#1f1611" stroke-width="0.9" stroke-linejoin="round"/><polyline points="406.7,260.5 530,271.4 559,275.5 520,287.2 500,288" fill="none" stroke="#1f1611" stroke-width="0.9" stroke-linejoin="round"/><polyline points="406.7,260.5 408.3,278.4 448,280 471.6,283.9" fill="none" stroke="#1f1611" stroke-width="0.9" stroke-linejoin="round"/><polyline points="417.7,270.6 451.25,279.2" fill="none" stroke="#1f1611" stroke-width="0.9" stroke-linejoin="round"/><polyline points="417.7,270.6 418.5,278.4" fill="none" stroke="#1f1611" stroke-width="0.9" stroke-linejoin="round"/><polyline points="466,284 429.4,284.7 412.2,289.4 448,301.9 487,306.6 515,303" fill="none" stroke="#1f1611" stroke-width="0.9" stroke-linejoin="round"/><polygon points="462,296 472.3,292.6 518.8,291.9 519.5,293.9 495.5,302.1 462,296.7" fill="#2a201a" stroke="#55453a" stroke-width="0.5"/><polygon points="470.3,289.1 475,279.6 480.5,276.8 495.5,274.1 502.4,278.9 509.2,283.7 510.6,289.8 509.2,296 495.5,300.1 471,296.7" fill="#2b2019"/><polygon points="475.7,283 478.5,278.2 483.2,279.6 480.5,283.7" fill="#c6a678"/><polygon points="491.4,285.7 494.2,280.9 502.4,283 499.6,287.8" fill="#c6a678"/><polygon points="474.4,289.1 481.9,288.5 482.6,292.6 475,291.9" fill="#c6a678"/><polygon points="483.9,291.2 506.5,288.5 507.2,290.5 484.6,293.2" fill="#c6a678"/><polygon points="471.6,293.9 481.9,294.6 481.2,298.7 472.3,297.3" fill="#bf9f72"/><polygon points="485.3,295.3 507.8,292.6 507.2,296 486,300.1" fill="#bf9f72"/><path d="M488.7 294.5v5M492.1 294v5M495.5 293.6v5M499 293.2v4.5M502.4 292.8v4M505.1 292.5v4M484 280l11-5 8 5" stroke="#2a1f19" stroke-width="0.8" fill="none"/></g><polygon points="190.4,275 232.5,247.6 374,226.5 791,269.6 931.4,325.8 707,454.5 472,406 187,307" fill="none" stroke="#2b201a" stroke-width="0.8"/></svg>
<svg class="a" style="left:0px;top:0px;" width="1024" height="200" viewBox="0 0 1024 200"><ellipse cx="967" cy="154.2" rx="33.3" ry="10.8" fill="none" stroke="#e6e6e6" stroke-width="3.2"/><ellipse cx="967" cy="154.2" rx="33.3" ry="10.8" fill="none" stroke="#cfcfcf" stroke-width="3.2" stroke-dasharray="0.7 0.9"/><ellipse cx="967" cy="154.2" rx="31" ry="9" fill="#fafafa"/><defs><linearGradient id="ff" x1="0" y1="0" x2="0" y2="1"><stop offset="0" stop-color="#eeeeee"/><stop offset="1" stop-color="#dcdcdc"/></linearGradient><linearGradient id="rf" x1="0" y1="0" x2="0" y2="1"><stop offset="0" stop-color="#e4e4e4"/><stop offset="1" stop-color="#d0d0d0"/></linearGradient></defs><polygon points="949,126.2 965.3,121.4 984.5,124.4 971.3,129.2" fill="#f4f4f4" stroke="#a8a8a8" stroke-width="0.6"/><polygon points="949,126.2 971.3,129.2 971.3,156.3 949.6,150.9" fill="url(#ff)" stroke="#a8a8a8" stroke-width="0.6"/><polygon points="971.3,129.2 984.5,124.4 984.5,148.5 971.3,156.3" fill="url(#rf)" stroke="#a8a8a8" stroke-width="0.6"/><text x="0" y="0" text-anchor="middle" font-family="Liberation Sans" font-weight="bold" font-size="6.6" fill="#7a7a7a" transform="translate(960.2 143.3) skewY(11) scale(0.69 1)">FRONT</text><text x="0" y="0" text-anchor="middle" font-family="Liberation Sans" font-weight="bold" font-size="6" fill="#8a8a8a" transform="translate(977.8 142.6) skewY(-28) scale(0.38 1)">RIGHT</text><path d="M964 124.5l2 -1 2 1" stroke="#bbb" stroke-width="0.6" fill="none"/></svg>
<div class="a" style="left:996.5px;top:181.5px;width:18px;height:61.5px;background:#f7f7f7;border:0.8px solid #c5c5c5;border-radius:3px"></div>
<svg class="a" style="left:996.5px;top:181.5px;" width="18" height="62" viewBox="0 0 18 62"><circle cx="14.9" cy="3.5" r="1.6" fill="none" stroke="#999" stroke-width="0.7"/><circle cx="14.9" cy="58" r="1.6" fill="none" stroke="#999" stroke-width="0.7"/><path d="M5.5 12.5h6.5l2.5 2.5v6.5l-2.5 2.5h-6.5l-2.5-2.5v-6.5z" fill="none" stroke="#8d8d8d" stroke-width="1"/><rect x="6" y="15" width="6" height="6" rx="2" fill="#eee" stroke="#8d8d8d" stroke-width="0.8"/><path d="M8 26l1 1 1-1z" fill="#777"/><path d="M3 31h12" stroke="#d5d5d5" stroke-width="0.6"/><rect x="5" y="34.5" width="6" height="6.5" fill="#e0e0e0" stroke="#8d8d8d" stroke-width="0.7"/><circle cx="10.5" cy="41" r="1.6" fill="none" stroke="#666" stroke-width="0.8"/><path d="M11.5 42.2l1.5 1.5" stroke="#666" stroke-width="0.8"/><path d="M8 50l1 1 1-1z" fill="#777"/></svg>
<div class="a" style="left:0px;top:260px;width:106px;height:267px;background:#f0f0f0"></div>
<div class="a" style="left:106px;top:89px;width:1px;height:438px;background:#c9c9c9"></div>
<div class="a" style="left:0px;top:260px;width:95px;height:5.3px;background:#fff"></div>
<div class="a" style="left:0px;top:265.3px;width:95px;height:9.3px;background:#dcdcdc"></div>
<div class="a" style="left:0px;top:274.6px;width:95px;height:14.4px;background:#fff"></div>
<div class="a" style="left:0px;top:284.6px;width:95px;height:0.8px;background:#e3e3e3"></div>
<div class="a" style="left:44.7px;top:260px;width:0.8px;height:5.3px;background:#e0e0e0"></div>
<div class="a" style="left:44.7px;top:274.6px;width:0.8px;height:14.4px;background:#e0e0e0"></div>
<div class="a" style="left:89.3px;top:260px;width:0.8px;height:5.3px;background:#e0e0e0"></div>
<div class="a" style="left:89.3px;top:274.6px;width:0.8px;height:14.4px;background:#e0e0e0"></div>
<div class="a" style="left:47.5px;top:258px;width:7px;height:6px;border:0.8px solid #666;background:#fff"></div>
<div class="t" style="left:5.00px;top:255.35px;font-size:7.01px;color:#1e1e1e;font-weight:normal;transform:scaleX(0.885);transform-origin:0 50%;">Sun Path</div>
<div class="a" style="left:47.5px;top:276.5px;width:7px;height:7px;border:0.8px solid #555;background:#fff"></div>
<div class="a" style="left:47.5px;top:286.5px;width:7px;height:4px;border:0.8px solid #666;border-bottom:none;background:#fff"></div>
<div class="t" style="left:2.00px;top:265.25px;font-size:7.01px;color:#1e1e1e;font-weight:normal;transform:scaleX(0.885);transform-origin:0 50%;">Extents</div>
<svg class="a" style="left:88px;top:266.5px;" width="6" height="7" viewBox="0 0 6 7"><path d="M1 3l2-2 2 2M1 6l2-2 2 2" stroke="#444" stroke-width="0.9" fill="none"/></svg>
<div class="t" style="left:5.00px;top:274.45px;font-size:7.01px;color:#1e1e1e;font-weight:normal;transform:scaleX(0.885);transform-origin:0 50%;">Crop View</div>
<div class="t" style="left:5.00px;top:284.85px;font-size:7.01px;color:#555;font-weight:normal;transform:scaleX(0.885);transform-origin:0 50%;height:4px;overflow:hidden;line-height:10px">Crop Region</div>
<div class="a" style="left:95px;top:260px;width:11px;height:29px;background:#f0f0f0"></div>
<svg class="a" style="left:97.5px;top:282px;" width="6" height="4" viewBox="0 0 6 4"><path d="M0.5 0.5l2.5 2.5 2.5-2.5" stroke="#555" stroke-width="0.9" fill="none"/></svg>
<div class="a" style="left:0px;top:289px;width:106px;height:14px;background:#f0f0f0"></div>
<div class="t" style="left:2.00px;top:290.55px;font-size:6.89px;color:#2f6fd6;font-weight:normal;transform:scaleX(0.885);transform-origin:0 50%;text-decoration:underline">Properties help</div>
<div class="a" style="left:65px;top:290px;width:39px;height:11.5px;background:#d9d9d9;border:0.6px solid #d0d0d0"></div>
<div class="t" style="left:24.50px;top:291.05px;width:120px;text-align:center;font-size:7.12px;color:#a9a9a9;font-weight:normal;transform:scaleX(0.885);transform-origin:60px 50%;">Apply</div>
<div class="a" style="left:0px;top:302.8px;width:106px;height:0.8px;background:#d6d6d6"></div>
<div class="t" style="left:2.00px;top:305.15px;font-size:7.06px;color:#444;font-weight:normal;transform:scaleX(0.885);transform-origin:0 50%;">Project Browser - House-Cleaned</div>
<svg class="a" style="left:97.5px;top:306px;" width="6" height="6" viewBox="0 0 6 6"><path d="M0.7 0.7l4.6 4.6M5.3 0.7l-4.6 4.6" stroke="#333" stroke-width="1.1"/></svg>
<div class="a" style="left:0px;top:314.5px;width:97px;height:204px;background:#fff"></div>
<div class="a" style="left:97px;top:314.5px;width:9px;height:204px;background:#f0f0f0"></div>
<div class="a" style="left:97.5px;top:323px;width:8px;height:72px;background:#cdcdcd"></div>
<svg class="a" style="left:98px;top:316.5px;" width="6" height="4" viewBox="0 0 6 4"><path d="M0.5 3l2.5-2.5 2.5 2.5" stroke="#555" stroke-width="0.9" fill="none"/></svg>
<svg class="a" style="left:98px;top:512.5px;" width="6" height="4" viewBox="0 0 6 4"><path d="M0.5 0.5l2.5 2.5 2.5-2.5" stroke="#555" stroke-width="0.9" fill="none"/></svg>
<div class="a" style="left:0px;top:518.5px;width:106px;height:8.5px;background:#f0f0f0"></div>
<div class="a" style="left:10px;top:519.5px;width:54px;height:7px;background:#cdcdcd"></div>
<svg class="a" style="left:3px;top:520px;" width="4" height="6" viewBox="0 0 4 6"><path d="M3 0.5L0.8 3 3 5.5" stroke="#555" stroke-width="0.9" fill="none"/></svg>
<svg class="a" style="left:91px;top:520px;" width="4" height="6" viewBox="0 0 4 6"><path d="M1 0.5L3.2 3 1 5.5" stroke="#555" stroke-width="0.9" fill="none"/></svg>
<div class="a" style="left:21.4px;top:314.09999999999997px;width:31px;height:9.2px;background:#e3e3e3"></div>
<div class="t" style="left:23.00px;top:314.55px;font-size:6.89px;color:#1e1e1e;font-weight:normal;transform:scaleX(0.885);transform-origin:0 50%;">Views (all)</div>
<div class="t" style="left:25.00px;top:324.19px;font-size:6.89px;color:#1e1e1e;font-weight:normal;transform:scaleX(0.885);transform-origin:0 50%;">Structural Plans</div>
<div class="t" style="left:25.00px;top:333.83px;font-size:6.89px;color:#1e1e1e;font-weight:normal;transform:scaleX(0.885);transform-origin:0 50%;">Floor Plans</div>
<div class="t" style="left:35.60px;top:343.47px;font-size:6.50px;color:#1e1e1e;font-weight:normal;transform:scaleX(0.885);transform-origin:0 50%;">1ST FLOOR</div>
<div class="t" style="left:35.60px;top:353.11px;font-size:6.50px;color:#1e1e1e;font-weight:normal;transform:scaleX(0.885);transform-origin:0 50%;">1ST FLR CELING</div>
<div class="t" style="left:35.60px;top:362.75px;font-size:6.50px;color:#1e1e1e;font-weight:normal;transform:scaleX(0.885);transform-origin:0 50%;">2ND FLOOR</div>
<div class="t" style="left:35.60px;top:372.39px;font-size:6.50px;color:#1e1e1e;font-weight:normal;transform:scaleX(0.885);transform-origin:0 50%;">2ND FLOOR CELING</div>
<div class="t" style="left:35.60px;top:382.03px;font-size:6.89px;color:#1e1e1e;font-weight:normal;transform:scaleX(0.885);transform-origin:0 50%;">BASEMENT</div>
<div class="t" style="left:35.60px;top:391.67px;font-size:6.89px;color:#1e1e1e;font-weight:normal;transform:scaleX(0.885);transform-origin:0 50%;">RAILING</div>
<div class="t" style="left:35.60px;top:401.31px;font-size:6.89px;color:#1e1e1e;font-weight:normal;transform:scaleX(0.885);transform-origin:0 50%;">ROOF</div>
<div class="t" style="left:35.60px;top:410.95px;font-size:6.89px;color:#1e1e1e;font-weight:normal;transform:scaleX(0.885);transform-origin:0 50%;">Site</div>
<div class="t" style="left:25.00px;top:420.59px;font-size:6.89px;color:#1e1e1e;font-weight:normal;transform:scaleX(0.885);transform-origin:0 50%;">Ceiling Plans</div>
<div class="t" style="left:25.00px;top:430.23px;font-size:6.89px;color:#1e1e1e;font-weight:normal;transform:scaleX(0.885);transform-origin:0 50%;">3D Views</div>
<div class="t" style="left:35.60px;top:439.87px;font-size:6.89px;color:#1e1e1e;font-weight:normal;transform:scaleX(0.885);transform-origin:0 50%;">3D View 1</div>
<div class="t" style="left:35.60px;top:449.51px;font-size:6.89px;color:#1e1e1e;font-weight:normal;transform:scaleX(0.885);transform-origin:0 50%;">3D View 2</div>
<div class="t" style="left:35.60px;top:459.15px;font-size:6.89px;color:#1e1e1e;font-weight:normal;transform:scaleX(0.885);transform-origin:0 50%;">3D View 3</div>
<div class="t" style="left:35.60px;top:468.79px;font-size:6.89px;color:#1e1e1e;font-weight:normal;transform:scaleX(0.885);transform-origin:0 50%;">3D View 4</div>
<div class="t" style="left:35.60px;top:478.43px;font-size:6.89px;color:#1e1e1e;font-weight:bold;transform:scaleX(0.885);transform-origin:0 50%;">(3D)</div>
<div class="t" style="left:35.60px;top:488.07px;font-size:6.89px;color:#1e1e1e;font-weight:normal;transform:scaleX(0.885);transform-origin:0 50%;">(3D) Copy 1</div>
<div class="t" style="left:25.00px;top:497.71px;font-size:6.89px;color:#1e1e1e;font-weight:normal;transform:scaleX(0.885);transform-origin:0 50%;">Elevations (Building Eleva</div>
<div class="t" style="left:35.60px;top:507.35px;font-size:6.89px;color:#1e1e1e;font-weight:normal;transform:scaleX(0.885);transform-origin:0 50%;">East</div>
<svg class="a" style="left:0px;top:314.5px;overflow:hidden" width="97" height="204" viewBox="0 0 97 204"><g transform="translate(0,-314.5)"><path d="M5.5 321.7 V501.86" stroke="#bdbdbd" stroke-width="0.6" stroke-dasharray="0.8 0.8"/><path d="M26.5 340.98 V415.1" stroke="#bdbdbd" stroke-width="0.6" stroke-dasharray="0.8 0.8"/><path d="M26.5 437.38 V492.22" stroke="#bdbdbd" stroke-width="0.6" stroke-dasharray="0.8 0.8"/><path d="M26.5 504.86 V517.284" stroke="#bdbdbd" stroke-width="0.6" stroke-dasharray="0.8 0.8"/><rect x="3" y="316.2" width="5" height="5" fill="#fff" stroke="#b5b5b5" stroke-width="0.6"/><path d="M4 318.7h3" stroke="#777" stroke-width="0.6"/><rect x="13" y="316.2" width="5" height="5" rx="1.5" fill="none" stroke="#555" stroke-width="0.8"/><path d="M11.5 314.7l1 1M19.5 314.7l-1 1M11.5 322.7l1-1M19.5 322.7l-1-1" stroke="#555" stroke-width="0.7"/><rect x="13" y="325.84" width="5.5" height="5.5" fill="#fff" stroke="#b5b5b5" stroke-width="0.6"/><path d="M14 328.53999999999996h3.5" stroke="#555" stroke-width="0.6"/><path d="M15.75 326.73999999999995v3.6" stroke="#555" stroke-width="0.6"/><path d="M18.5 328.53999999999996h5" stroke="#c4c4c4" stroke-width="0.6"/><path d="M5.5 328.53999999999996h7.5" stroke="#c4c4c4" stroke-width="0.6" stroke-dasharray="0.8 0.8"/><rect x="13" y="335.48" width="5.5" height="5.5" fill="#fff" stroke="#b5b5b5" stroke-width="0.6"/><path d="M14 338.18h3.5" stroke="#555" stroke-width="0.6"/><path d="M18.5 338.18h5" stroke="#c4c4c4" stroke-width="0.6"/><path d="M5.5 338.18h7.5" stroke="#c4c4c4" stroke-width="0.6" stroke-dasharray="0.8 0.8"/><path d="M26.5 347.82h7.5" stroke="#c4c4c4" stroke-width="0.6"/><path d="M26.5 357.46h7.5" stroke="#c4c4c4" stroke-width="0.6"/><path d="M26.5 367.09999999999997h7.5" stroke="#c4c4c4" stroke-width="0.6"/><path d="M26.5 376.73999999999995h7.5" stroke="#c4c4c4" stroke-width="0.6"/><path d="M26.5 386.38h7.5" stroke="#c4c4c4" stroke-width="0.6"/><path d="M26.5 396.02h7.5" stroke="#c4c4c4" stroke-width="0.6"/><path d="M26.5 405.65999999999997h7.5" stroke="#c4c4c4" stroke-width="0.6"/><path d="M26.5 415.3h7.5" stroke="#c4c4c4" stroke-width="0.6"/><rect x="13" y="422.24" width="5.5" height="5.5" fill="#fff" stroke="#b5b5b5" stroke-width="0.6"/><path d="M14 424.94h3.5" stroke="#555" stroke-width="0.6"/><path d="M15.75 423.14v3.6" stroke="#555" stroke-width="0.6"/><path d="M18.5 424.94h5" stroke="#c4c4c4" stroke-width="0.6"/><path d="M5.5 424.94h7.5" stroke="#c4c4c4" stroke-width="0.6" stroke-dasharray="0.8 0.8"/><rect x="13" y="431.88" width="5.5" height="5.5" fill="#fff" stroke="#b5b5b5" stroke-width="0.6"/><path d="M14 434.58h3.5" stroke="#555" stroke-width="0.6"/><path d="M18.5 434.58h5" stroke="#c4c4c4" stroke-width="0.6"/><path d="M5.5 434.58h7.5" stroke="#c4c4c4" stroke-width="0.6" stroke-dasharray="0.8 0.8"/><path d="M26.5 444.21999999999997h7.5" stroke="#c4c4c4" stroke-width="0.6"/><path d="M26.5 453.85999999999996h7.5" stroke="#c4c4c4" stroke-width="0.6"/><path d="M26.5 463.5h7.5" stroke="#c4c4c4" stroke-width="0.6"/><path d="M26.5 473.14h7.5" stroke="#c4c4c4" stroke-width="0.6"/><path d="M26.5 482.78h7.5" stroke="#c4c4c4" stroke-width="0.6"/><path d="M26.5 492.42h7.5" stroke="#c4c4c4" stroke-width="0.6"/><rect x="13" y="499.36" width="5.5" height="5.5" fill="#fff" stroke="#b5b5b5" stroke-width="0.6"/><path d="M14 502.06h3.5" stroke="#555" stroke-width="0.6"/><path d="M18.5 502.06h5" stroke="#c4c4c4" stroke-width="0.6"/><path d="M5.5 502.06h7.5" stroke="#c4c4c4" stroke-width="0.6" stroke-dasharray="0.8 0.8"/><path d="M26.5 511.7h7.5" stroke="#c4c4c4" stroke-width="0.6"/></g></svg>
<div class="a" style="left:107px;top:77px;width:917px;height:12px;background:#cecfce;background-image:radial-gradient(circle,rgba(0,0,0,0.035) 0.5px,transparent 0.9px);background-size:4px 3.5px;background-position:1px 1px"></div>
<svg class="a" style="left:1016px;top:80px;" width="7" height="6" viewBox="0 0 7 6"><path d="M1 1h5" stroke="#444" stroke-width="0.9"/><path d="M1 2.5h5l-2.5 3z" fill="#444"/></svg>
<div class="a" style="left:1016px;top:89px;width:8px;height:429.5px;background:#f0f0f0"></div>
<svg class="a" style="left:1017px;top:93px;" width="6" height="4" viewBox="0 0 6 4"><path d="M0.5 3l2.5-2.5 2.5 2.5" stroke="#555" stroke-width="0.9" fill="none"/></svg>
<div class="a" style="left:1017px;top:298px;width:6px;height:10px;background:#cdcdcd"></div>
<svg class="a" style="left:1017px;top:512px;" width="6" height="4" viewBox="0 0 6 4"><path d="M0.5 0.5l2.5 2.5 2.5-2.5" stroke="#555" stroke-width="0.9" fill="none"/></svg>
<div class="a" style="left:107px;top:518.5px;width:917px;height:8px;background:#eeeeee"></div>
<div class="a" style="left:656px;top:519px;width:9.5px;height:7.5px;background:#cdcdcd"></div>
<svg class="a" style="left:1009px;top:520px;" width="5" height="6" viewBox="0 0 5 6"><path d="M1 0.5L3.5 3 1 5.5" stroke="#444" stroke-width="1" fill="none"/></svg>
<div class="a" style="left:107px;top:518.3px;width:210px;height:8.7px;background:#f0f0f0"></div>
<div class="t" style="left:69.20px;top:518.65px;width:120px;text-align:center;font-size:6.33px;color:#1e1e1e;font-weight:normal;transform:scaleX(0.885);transform-origin:60px 50%;">1/4" = 1'-0"</div>
<svg class="a" style="left:107px;top:518px;" width="210" height="9" viewBox="0 0 210 9"><g transform="translate(47.400000000000006,4.5)"><rect x="-3.5" y="-2.5" width="7" height="5" fill="#fff" stroke="#333" stroke-width="0.9"/><path d="M-3 -2l3 2 3-2" stroke="#333" stroke-width="0.7" fill="none"/></g><g transform="translate(59.19999999999999,4.5)"><path d="M-4 -1l2-2h6v5l-2 2h-6z" fill="#6aa8ec" stroke="#2f6fc8" stroke-width="0.8"/><path d="M-4 -1h6v5M2 -1l2-2" stroke="#2f6fc8" stroke-width="0.7" fill="none"/></g><g transform="translate(68.9,4.5)"><circle cx="-1" cy="-0.5" r="2.2" fill="none" stroke="#e2742c" stroke-width="0.9" stroke-dasharray="1 0.6"/><path d="M1.5 -2.5v5M1.5 0l2.5-2.5M1.5 0l2.5 2.5" stroke="#e2742c" stroke-width="0.9"/></g><g transform="translate(80.69999999999999,4.5)"><circle cx="-1.5" cy="-1" r="2" fill="#6aa8ec" stroke="#2f6fc8" stroke-width="0.7"/><path d="M-4 3h4" stroke="#2f6fc8" stroke-width="0.9"/><path d="M1 0v4M1 2l2.5-2M1 2l2.5 2" stroke="#e2742c" stroke-width="0.9"/></g><g transform="translate(92.5,4.5)"><path d="M-4 -2c2-2 5-2 7 0l-2 4h-4z" fill="none" stroke="#555" stroke-width="0.8"/><circle cx="2.5" cy="1.5" r="1.6" fill="#6aa8ec" stroke="#2f6fc8" stroke-width="0.6"/></g><g transform="translate(103.30000000000001,4.5)"><path d="M-4 2l4-4 4 1-1 4z" fill="#e2742c"/><path d="M-4 3l7-5" stroke="#2f6fc8" stroke-width="1.2"/><path d="M-2 -3l5 1" stroke="#2f6fc8" stroke-width="1"/></g><g transform="translate(115.1,4.5)"><path d="M-4 1l3-3 4 1-1 3z" fill="#2f6fc8"/><circle cx="2" cy="1" r="2" fill="none" stroke="#555" stroke-width="0.8"/><path d="M-3 3l2-2" stroke="#e2742c" stroke-width="1"/></g><g transform="translate(126.19999999999999,4.5)"><circle cx="0" cy="0" r="3.6" fill="none" stroke="#555" stroke-width="0.9"/><rect x="-1.8" y="-1.5" width="3.6" height="3.5" fill="#fff" stroke="#444" stroke-width="0.7"/></g><g transform="translate(136.6,4.5)"><path d="M-4 1c1-3 4-3 5-1s3 2 4-1" stroke="#555" stroke-width="0.8" fill="none"/><circle cx="0" cy="1" r="1.5" fill="none" stroke="#555" stroke-width="0.7"/></g><g transform="translate(147.7,4.5)"><path d="M0 -2.5a1.6 1.6 0 1 1 0.1 0zM0 0v2.5" stroke="#2f6fc8" stroke-width="0.9" fill="#fff"/></g><g transform="translate(158,4.5)"><rect x="-4" y="-2" width="6" height="5" fill="none" stroke="#333" stroke-width="0.9"/><circle cx="2.5" cy="1.5" r="1.8" fill="#fff" stroke="#333" stroke-width="0.8"/></g><g transform="translate(169.89999999999998,4.5)"><path d="M-4 3v-3l3-3h4l1.5 3v3z" fill="#e2742c"/><rect x="-3" y="0" width="6" height="2.5" fill="#2f6fc8"/><circle cx="3" cy="1" r="1.5" fill="#fff" stroke="#333" stroke-width="0.7"/></g><g transform="translate(181.7,4.5)"><rect x="-4" y="-2" width="6" height="5" fill="#ddd" stroke="#444" stroke-width="0.8"/><path d="M-2 -3.5h6v5" stroke="#444" stroke-width="0.8" fill="none"/><circle cx="2.5" cy="1.5" r="1.5" fill="#fff" stroke="#444" stroke-width="0.6"/></g><g transform="translate(192.39999999999998,4.5)"><rect x="-4" y="-2" width="8" height="5" fill="none" stroke="#444" stroke-width="0.9"/><path d="M-4 -2.5h8" stroke="#444" stroke-width="1.3"/></g><g transform="translate(203.2,4.5)"><path d="M1.5 -2.5L-1 0l2.5 2.5" stroke="#333" stroke-width="0.9" fill="none"/></g></svg>
<div class="a" style="left:0px;top:527.5px;width:1024px;height:13.5px;background:#cfd0cf;background-image:radial-gradient(circle,rgba(0,0,0,0.035) 0.5px,transparent 0.9px);background-size:4px 3.5px;background-position:1px 1px"></div>
<div class="t" style="left:1.50px;top:531.15px;font-size:6.76px;color:#1e1e1e;font-weight:normal;transform:scaleX(0.885);transform-origin:0 50%;">Click to select, TAB for alternates, CTRL adds, SHIFT unselects.</div>
<svg class="a" style="left:477px;top:529px;" width="11" height="11" viewBox="0 0 11 11"><path d="M3 3.5v-1.2a2 2 0 0 1 4 0v1.2" stroke="#666" stroke-width="0.8" fill="none"/><rect x="2" y="3.5" width="6" height="5" fill="#e6e6e6" stroke="#666" stroke-width="0.7"/><path d="M1.5 6l3 3 5-1-1-3z" fill="#3f86d9"/></svg>
<div class="a" style="left:490.6px;top:530.5px;width:110px;height:9.5px;background:#fff;border:0.6px solid #e3e3e3"></div>
<svg class="a" style="left:592px;top:533px;" width="6" height="4" viewBox="0 0 6 4"><path d="M0.5 0.5l2.5 2.5 2.5-2.5" stroke="#999" stroke-width="0.7" fill="none"/></svg>
<svg class="a" style="left:605px;top:529px;" width="16" height="11" viewBox="0 0 16 11"><path d="M2 9l4-4M4 2l3 3-2 2-3-3z" stroke="#b5b5b5" stroke-width="1" fill="#ddd"/><text x="9" y="8.5" font-size="6" font-family="Liberation Sans" fill="#333" font-weight="bold">:0</text></svg>
<svg class="a" style="left:632px;top:529.5px;" width="9" height="10" viewBox="0 0 9 10"><rect x="0.8" y="0.8" width="7.4" height="8.4" fill="#f4f4f4" stroke="#555" stroke-width="0.9"/><path d="M0.8 2.8h7.4M3 5h4M3 7h4" stroke="#555" stroke-width="0.7"/></svg>
<svg class="a" style="left:646px;top:529.5px;" width="9" height="10" viewBox="0 0 9 10"><rect x="1" y="2" width="6" height="6" fill="#aaa"/><path d="M3 0.5h5v5" stroke="#999" stroke-width="0.8" fill="none"/></svg>
<div class="a" style="left:659px;top:530.5px;width:110.4px;height:9.5px;background:#fff;border:0.6px solid #e3e3e3"></div>
<div class="t" style="left:661.00px;top:531.15px;font-size:6.78px;color:#777;font-weight:normal;transform:scaleX(0.885);transform-origin:0 50%;">Main Model</div>
<svg class="a" style="left:761px;top:533px;" width="6" height="4" viewBox="0 0 6 4"><path d="M0.5 0.5l2.5 2.5 2.5-2.5" stroke="#999" stroke-width="0.7" fill="none"/></svg>
<svg class="a" style="left:880px;top:528px;" width="110" height="13" viewBox="0 0 110 13"><g transform="translate(14.200000000000045,6.5)"><path d="M-4 -2h8M-4 -2l2-2M-4 -2l2 2M4 -2l-2-2M4 -2l-2 2" stroke="#e2742c" stroke-width="1.2" fill="none"/><path d="M0 -1l3 4-1.5 0.3 0.8 1.7" stroke="#444" stroke-width="0.7" fill="#fff"/></g><g transform="translate(28.5,6.5)"><path d="M-4 3l4-5h3v5z" fill="#3f86d9"/><path d="M1 -4h3v3" stroke="#e2742c" stroke-width="1.3" fill="none"/><path d="M1 -1l3 4-1.5 0.3" stroke="#444" stroke-width="0.7" fill="#fff"/></g><g transform="translate(41.5,6.5)"><circle cx="-1.5" cy="-2" r="2" fill="none" stroke="#e2742c" stroke-width="1"/><path d="M-4 2h4" stroke="#e2742c" stroke-width="1.2"/><path d="M0 -1l3 4-1.5 0.3 0.8 1.7" stroke="#444" stroke-width="0.7" fill="#fff"/></g><g transform="translate(55.89999999999998,6.5)"><path d="M-4 -3l4 1v6l-4-1z" fill="#3f86d9"/><path d="M1 -4h3v3" stroke="#e2742c" stroke-width="1.3" fill="none"/><path d="M1 -1l3 4-1.5 0.3" stroke="#444" stroke-width="0.7" fill="#fff"/></g><g transform="translate(70.20000000000005,6.5)"><path d="M-4 -3l3 0 0 3" stroke="#333" stroke-width="1.2" fill="none"/><path d="M0 -1l3 4-1.5 0.3 0.8 1.7" stroke="#333" stroke-width="0.8" fill="#fff"/></g><g transform="translate(83.20000000000005,6.5)"><circle cx="0" cy="0" r="3" fill="none" stroke="#aaa" stroke-width="1"/></g><g transform="translate(96.20000000000005,6.5)"><path d="M-4 -3.5h8l-3 4v4l-2-1v-3z" fill="none" stroke="#555" stroke-width="0.8"/></g></svg>
<div class="t" style="left:982.00px;top:531.35px;font-size:6.21px;color:#444;font-weight:bold;transform:scaleX(0.885);transform-origin:0 50%;">:0</div>
<div class="a" style="left:0px;top:12px;width:226px;height:248px;background:#efefef;box-shadow:0.5px 0.5px 1.5px rgba(0,0,0,0.35)"></div>
<div class="a" style="left:0px;top:12px;width:76px;height:248px;background:#dbdbdb;background-image:radial-gradient(circle,rgba(0,0,0,0.035) 0.5px,transparent 0.9px);background-size:3px 3px"></div>
<svg class="a" style="left:49px;top:15.5px;" width="23" height="12" viewBox="0 0 23 12"><rect x="0.5" y="0.5" width="22" height="11" fill="#e3e3e3" stroke="#c8c8c8" stroke-width="0.6"/><path d="M11.5 0.5v11" stroke="#c8c8c8" stroke-width="0.6"/><path d="M3 4.5h3l2 2v3h-5z" fill="#fff" stroke="#555" stroke-width="0.8"/><path d="M5 2.5h2.5l1.5 1.5v2" fill="none" stroke="#555" stroke-width="0.7"/><path d="M13.5 3.5h3l1 1h3.5v5h-7.5z" fill="#d5d5d5" stroke="#555" stroke-width="0.8"/><path d="M13.5 9.5l1.5-3h6.5l-1 3z" fill="#eee" stroke="#555" stroke-width="0.7"/></svg>
<div class="a" style="left:74.5px;top:16.2px;width:145.8px;height:217.6px;background:#fff;border:1px solid #6a9ddd"></div>
<div class="t" style="left:80.00px;top:21.35px;font-size:6.53px;color:#222;font-weight:bold;transform:scaleX(0.885);transform-origin:0 50%;">Saves current project or family. Saves current</div>
<div class="t" style="left:80.00px;top:28.35px;font-size:6.53px;color:#222;font-weight:bold;transform:scaleX(0.885);transform-origin:0 50%;">project as a template. Save any family, group or</div>
<div class="t" style="left:80.00px;top:35.35px;font-size:6.53px;color:#222;font-weight:bold;transform:scaleX(0.885);transform-origin:0 50%;">view to your library.</div>
<div class="a" style="left:80px;top:48px;width:134px;height:0.8px;background:#e2e2e2"></div>
<div class="a" style="left:75.2px;top:82.5px;width:144.5px;height:29px;background:#bcd6f0;border:1.2px solid #4a8de0;background-image:radial-gradient(circle, rgba(255,255,255,0.75) 0.45px, transparent 0.6px);background-size:2px 2px"></div>
<div class="t" style="left:106.00px;top:55.45px;font-size:6.72px;color:#111;font-weight:bold;transform:scaleX(0.885);transform-origin:0 50%;">Cloud Model</div>
<div class="t" style="left:106.00px;top:62.45px;font-size:6.84px;color:#222;font-weight:normal;transform:scaleX(0.885);transform-origin:0 50%;">Saves the current Revit model to the</div>
<div class="t" style="left:106.00px;top:69.30px;font-size:6.84px;color:#222;font-weight:normal;transform:scaleX(0.885);transform-origin:0 50%;">cloud.</div>
<div class="t" style="left:106.00px;top:87.95px;font-size:6.72px;color:#111;font-weight:bold;transform:scaleX(0.885);transform-origin:0 50%;">Project</div>
<div class="t" style="left:106.00px;top:96.55px;font-size:6.84px;color:#222;font-weight:normal;transform:scaleX(0.885);transform-origin:0 50%;">Saves the current Revit project file.</div>
<div class="t" style="left:106.00px;top:116.85px;font-size:6.72px;color:#9a9a9a;font-weight:bold;transform:scaleX(0.885);transform-origin:0 50%;">Family</div>
<div class="t" style="left:106.00px;top:125.15px;font-size:6.84px;color:#a5a5a5;font-weight:normal;transform:scaleX(0.885);transform-origin:0 50%;">Saves the current family.</div>
<div class="t" style="left:106.00px;top:145.25px;font-size:6.72px;color:#111;font-weight:bold;transform:scaleX(0.885);transform-origin:0 50%;">Template</div>
<div class="t" style="left:106.00px;top:152.25px;font-size:6.84px;color:#222;font-weight:normal;transform:scaleX(0.885);transform-origin:0 50%;">Saves the current Revit project file as a</div>
<div class="t" style="left:106.00px;top:159.10px;font-size:6.84px;color:#222;font-weight:normal;transform:scaleX(0.885);transform-origin:0 50%;">template.</div>
<div class="t" style="left:106.00px;top:177.85px;font-size:6.72px;color:#111;font-weight:bold;transform:scaleX(0.885);transform-origin:0 50%;">Library</div>
<div class="t" style="left:106.00px;top:184.85px;font-size:6.84px;color:#222;font-weight:normal;transform:scaleX(0.885);transform-origin:0 50%;">Saves a copy of all loaded families,</div>
<div class="t" style="left:106.00px;top:191.70px;font-size:6.84px;color:#222;font-weight:normal;transform:scaleX(0.885);transform-origin:0 50%;">the selected family, group, or view to</div>
<div class="t" style="left:106.00px;top:198.55px;font-size:6.84px;color:#222;font-weight:normal;transform:scaleX(0.885);transform-origin:0 50%;">your library.</div>
<svg class="a" style="left:208.5px;top:189.5px;" width="4" height="6" viewBox="0 0 4 6"><path d="M0.5 0.5L3.5 3 0.5 5.5z" fill="#444"/></svg>
<svg class="a" style="left:82.5px;top:56.5px;" width="19" height="19" viewBox="0 0 19 19"><path d="M1.5 5.5l4-4h8v11l-4 4h-8z" fill="#e9e9e9" stroke="#888" stroke-width="0.8"/><path d="M1.5 5.5h8v11M9.5 5.5l4-4" stroke="#888" stroke-width="0.7" fill="none"/><path d="M8 17c0-2 1.2-3 2.8-3 0.6-1.5 3.8-1.5 4.3 0.5 1.3 0 2 1.2 1.6 2.5z" fill="#a9cdf2" stroke="#4a90df" stroke-width="0.8"/></svg>
<svg class="a" style="left:83px;top:86px;" width="17" height="16" viewBox="0 0 17 16"><path d="M3 2h11v13h-11z" fill="#f7f7f7" stroke="#555" stroke-width="0.9"/><path d="M1 3.5h3v11h-3z" fill="#eaeaea" stroke="#555" stroke-width="0.8"/><path d="M6 2l3.5 3 3.5-3z" fill="#444"/></svg>
<svg class="a" style="left:83.5px;top:117px;" width="16" height="17" viewBox="0 0 16 17"><rect x="1" y="1" width="14" height="15" fill="#f3f3f3" stroke="#d3d3d3" stroke-width="0.8"/><rect x="3" y="2.5" width="7" height="10" fill="#fbfbfb" stroke="#d9d9d9" stroke-width="0.7"/></svg>
<svg class="a" style="left:83.5px;top:147.5px;" width="16" height="18" viewBox="0 0 16 18"><path d="M1 1h10l4 4v12h-14z" fill="#4f86c9" stroke="#223" stroke-width="0.9"/><path d="M2 2h8.5l3.5 3.5v7h-12z" fill="#dbe8f6"/><text x="4" y="11.5" font-family="Liberation Sans" font-weight="bold" font-size="9.5" fill="#1d3556">R</text><rect x="1" y="13" width="14" height="4" fill="#333"/><path d="M5 15h6" stroke="#999" stroke-width="0.8"/></svg>
<svg class="a" style="left:84.5px;top:183.5px;" width="14" height="18" viewBox="0 0 14 18"><path d="M1 4l3-3h9v13l-3 3h-9z" fill="#f4f4f4" stroke="#777" stroke-width="0.8"/><path d="M4 4v13M7 4v13M10 4v13M1 4h9l3-3" stroke="#777" stroke-width="0.7" fill="none"/></svg>
<div class="a" style="left:148px;top:241.8px;width:28.5px;height:12.5px;background:#f6f6f6;border:0.8px solid #bdbdbd"></div>
<div class="t" style="left:102.20px;top:243.85px;width:120px;text-align:center;font-size:6.89px;color:#1e1e1e;font-weight:normal;transform:scaleX(0.885);transform-origin:60px 50%;">Options</div>
<div class="a" style="left:187px;top:241.8px;width:30.5px;height:12.5px;background:#f6f6f6;border:0.8px solid #bdbdbd"></div>
<div class="t" style="left:142.20px;top:243.85px;width:120px;text-align:center;font-size:6.89px;color:#1e1e1e;font-weight:normal;transform:scaleX(0.885);transform-origin:60px 50%;">Exit Revit</div>
<div class="a" style="left:0.8px;top:117.2px;width:73px;height:28.4px;background:#bed7f1;border:0.8px dotted #4a8de0;background-image:radial-gradient(circle, rgba(255,255,255,0.75) 0.45px, transparent 0.6px);background-size:2px 2px"></div>
<div class="t" style="left:29.50px;top:42.85px;font-size:6.78px;color:#1e1e1e;font-weight:normal;transform:scaleX(0.885);transform-origin:0 50%;">New</div>
<div class="t" style="left:29.50px;top:71.05px;font-size:6.78px;color:#1e1e1e;font-weight:normal;transform:scaleX(0.885);transform-origin:0 50%;">Open</div>
<div class="t" style="left:29.50px;top:99.05px;font-size:6.78px;color:#1e1e1e;font-weight:normal;transform:scaleX(0.885);transform-origin:0 50%;">Save</div>
<div class="t" style="left:29.50px;top:127.85px;font-size:6.78px;color:#1e1e1e;font-weight:normal;transform:scaleX(0.885);transform-origin:0 50%;">Save As</div>
<div class="t" style="left:29.50px;top:156.15px;font-size:6.78px;color:#1e1e1e;font-weight:normal;transform:scaleX(0.885);transform-origin:0 50%;">Export</div>
<div class="t" style="left:29.50px;top:185.85px;font-size:6.78px;color:#1e1e1e;font-weight:normal;transform:scaleX(0.885);transform-origin:0 50%;">Print</div>
<div class="t" style="left:29.50px;top:215.85px;font-size:6.78px;color:#1e1e1e;font-weight:normal;transform:scaleX(0.885);transform-origin:0 50%;">Close</div>
<svg class="a" style="left:65px;top:44.5px;" width="4" height="5" viewBox="0 0 4 5"><path d="M0.5 0.5L3.2 2.5 0.5 4.5z" fill="#333"/></svg>
<svg class="a" style="left:65px;top:72.7px;" width="4" height="5" viewBox="0 0 4 5"><path d="M0.5 0.5L3.2 2.5 0.5 4.5z" fill="#333"/></svg>
<svg class="a" style="left:65px;top:129.5px;" width="4" height="5" viewBox="0 0 4 5"><path d="M0.5 0.5L3.2 2.5 0.5 4.5z" fill="#333"/></svg>
<svg class="a" style="left:65px;top:157.8px;" width="4" height="5" viewBox="0 0 4 5"><path d="M0.5 0.5L3.2 2.5 0.5 4.5z" fill="#333"/></svg>
<svg class="a" style="left:65px;top:187.5px;" width="4" height="5" viewBox="0 0 4 5"><path d="M0.5 0.5L3.2 2.5 0.5 4.5z" fill="#333"/></svg>
<div class="a" style="left:7px;top:174.2px;width:66px;height:0.8px;background:#c9c9c9"></div>
<div class="a" style="left:7px;top:204.2px;width:66px;height:0.8px;background:#c9c9c9"></div>
<svg class="a" style="left:8.5px;top:39.5px;" width="18" height="15" viewBox="0 0 18 15"><path d="M1 1.5h12l4 3.5v9h-16z" fill="#f6f6f6" stroke="#666" stroke-width="0.9"/><path d="M13 1.5v3.5h4" fill="none" stroke="#666" stroke-width="0.8"/></svg>
<svg class="a" style="left:8.5px;top:68px;" width="18" height="15" viewBox="0 0 18 15"><path d="M1 2h5l1.5 1.5h6.5v3h-13z" fill="#ddd" stroke="#666" stroke-width="0.8"/><path d="M1 14l3-7.5h13l-3 7.5z" fill="#e9e9e9" stroke="#666" stroke-width="0.8"/><path d="M1 2v12" stroke="#666" stroke-width="0.8"/></svg>
<svg class="a" style="left:10px;top:96px;" width="15" height="15" viewBox="0 0 15 15"><rect x="0.8" y="0.8" width="13.4" height="13.4" rx="1" fill="#444"/><rect x="3" y="1" width="9" height="5.5" fill="#eee"/><rect x="3" y="9" width="9" height="5" fill="#ddd"/><rect x="4" y="10" width="3" height="3" fill="#444"/></svg>
<svg class="a" style="left:9px;top:122px;" width="18" height="18" viewBox="0 0 18 18"><rect x="0.8" y="3.8" width="13.4" height="13.4" rx="1" fill="#444"/><rect x="3" y="4" width="9" height="5.5" fill="#eee"/><rect x="3" y="12" width="9" height="5" fill="#ddd"/><rect x="4" y="13" width="3" height="3" fill="#444"/><path d="M8 10l8-8 1.5 1.5-8 8-2 0.5z" fill="#f0a050" stroke="#8a4a20" stroke-width="0.7"/></svg>
<svg class="a" style="left:8.5px;top:151px;" width="18" height="17" viewBox="0 0 18 17"><path d="M1 1h9l4 4v11h-13z" fill="#f6f6f6" stroke="#666" stroke-width="0.9"/><path d="M10 1v4h4" fill="none" stroke="#666" stroke-width="0.8"/><path d="M6 9.5h7" stroke="#3f86d9" stroke-width="2.2"/><path d="M12.5 6l4 3.5-4 3.5z" fill="#3f86d9"/></svg>
<svg class="a" style="left:8.5px;top:181px;" width="18" height="17" viewBox="0 0 18 17"><rect x="4" y="1" width="10" height="5" fill="#fff" stroke="#555" stroke-width="0.8"/><path d="M1 6h16v6h-16z" fill="#d9d9d9" stroke="#555" stroke-width="0.9"/><rect x="4" y="11" width="10" height="5" fill="#fff" stroke="#555" stroke-width="0.8"/><path d="M5 13.5h8" stroke="#7aa6d9" stroke-width="0.7"/><path d="M1 8h16" stroke="#888" stroke-width="0.6"/></svg>
<svg class="a" style="left:8.5px;top:211.5px;" width="18" height="17" viewBox="0 0 18 17"><path d="M1 1h9l4 4v11h-13z" fill="#f6f6f6" stroke="#666" stroke-width="0.9"/><path d="M10 1v4h4" fill="none" stroke="#666" stroke-width="0.8"/><rect x="9.5" y="10" width="7" height="6.5" fill="#e07a2e"/><path d="M11.5 12l3 2.5M14.5 12l-3 2.5" stroke="#fff" stroke-width="0.8"/></svg>
<svg class="a" style="left:0px;top:0px;" width="60" height="60" viewBox="0 0 60 60"><circle cx="29.6" cy="25.9" r="14.8" fill="#4a86d8"/><path d="M28.7 17.2h2.9V36h-2.9zM28.9 17.2l-4.6 4.2 1.1 2.1 4.2-3z" fill="#fff"/></svg>
<svg class="a" style="left:150px;top:100px;" width="70" height="60" viewBox="0 0 70 60"><circle cx="49.3" cy="32.5" r="14.6" fill="#4a86d8"/><text x="49.6" y="41.4" text-anchor="middle" font-family="Liberation Sans" font-size="24" fill="#fff" transform="translate(49.6 41.4) scale(0.96 0.98) translate(-49.6 -41.4)">2</text></svg>
</body></html>
